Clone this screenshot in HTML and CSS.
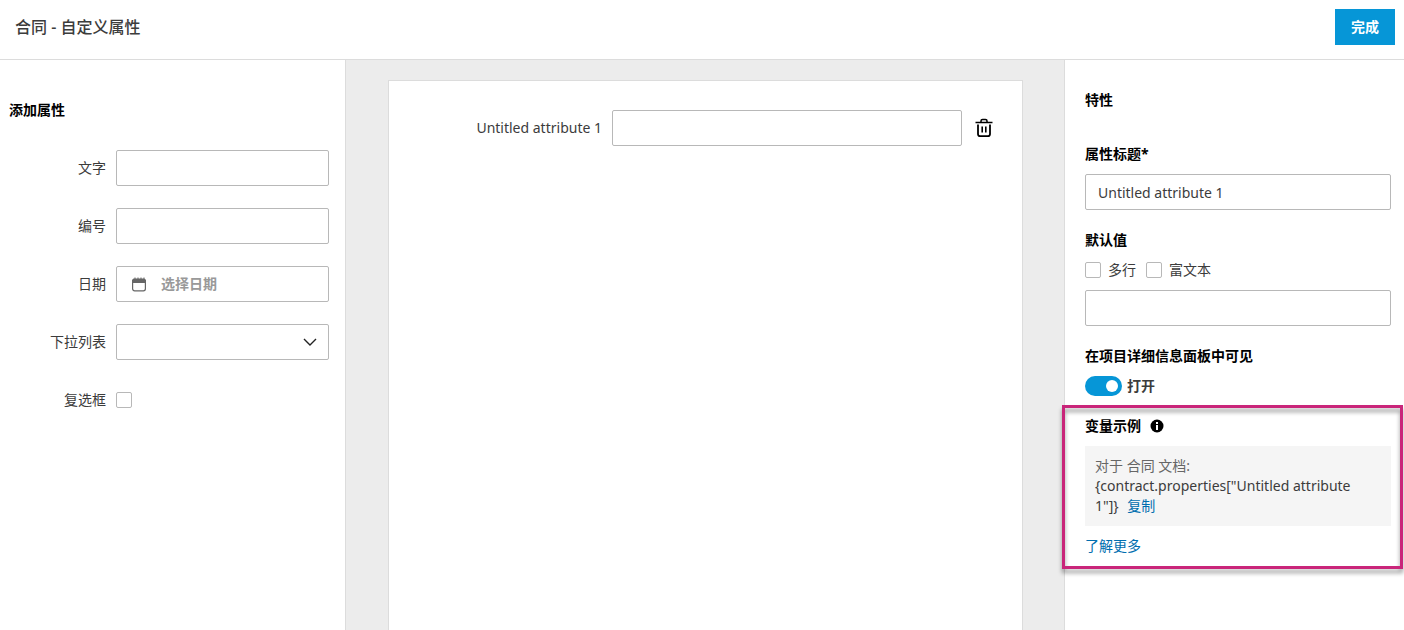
FILE: index.html
```html
<!DOCTYPE html>
<html lang="zh-CN">
<head>
  <meta charset="UTF-8">
  <title>合同 - 自定义属性</title>
  <link rel="stylesheet" href="styles.css">
</head>
<body>
  <header class="topbar">
    <h1>合同 - 自定义属性</h1>
    <button class="done" type="button">完成</button>
  </header>

  <main class="layout">
    <aside class="palette">
      <h2>添加属性</h2>
      <div class="field">
        <label for="addText">文字</label>
        <input id="addText" class="box" type="text">
      </div>
      <div class="field">
        <label for="addNumber">编号</label>
        <input id="addNumber" class="box" type="text">
      </div>
      <div class="field">
        <label for="addDate">日期</label>
        <div class="box date">
          <svg width="14" height="15" viewBox="0 0 14 15">
            <rect x="0.6" y="2.6" width="12.8" height="11.2" rx="2" fill="none" stroke="#666" stroke-width="1.2"/>
            <path d="M0 6V3l1.500-1.500h1V.5h1v1h2V.5h1v1h2V.5h1v1h2V.5h1v1L14 3v3z" fill="#666"/>
          </svg>
          <input id="addDate" type="text" placeholder="选择日期">
        </div>
      </div>
      <div class="field">
        <label for="addList">下拉列表</label>
        <div class="dropdown">
          <select id="addList" class="box"><option></option></select>
          <svg width="14" height="8" viewBox="0 0 14 8"><path d="M1 1l6 6 6-6" fill="none" stroke="#222" stroke-width="1.4"/></svg>
        </div>
      </div>
      <div class="field">
        <label for="addCheck">复选框</label>
        <input id="addCheck" class="check" type="checkbox">
      </div>
    </aside>

    <section class="canvas">
      <div class="sheet">
        <div class="attribute">
          <label for="attr1">Untitled attribute 1</label>
          <input id="attr1" class="box" type="text">
          <button class="trash" type="button" aria-label="删除">
            <svg width="18" height="20" viewBox="0 0 18 20" fill="none" stroke="#000">
              <path d="M0.500 4.500h17" stroke-width="1.500"/>
              <path d="M6 4V3q0-1.500 1.500-1.500h3q1.500 0 1.500 1.500v1" stroke-width="1.500"/>
              <path d="M3 6.500V16q0 2.200 2.200 2.200h7.600Q15 18.200 15 16V6.500" stroke-width="1.800"/>
              <path d="M7.200 8.500v6M10.800 8.500v6" stroke-width="1.600"/>
            </svg>
          </button>
        </div>
      </div>
    </section>

    <aside class="props">
      <h2>特性</h2>

      <div class="group">
        <label class="title" for="attrTitle">属性标题*</label>
        <input id="attrTitle" class="box" type="text" value="Untitled attribute 1">
      </div>

      <div class="group">
        <label class="title" for="defValue">默认值</label>
        <div class="checks">
          <label><input class="check" type="checkbox">多行</label>
          <label><input class="check" type="checkbox">富文本</label>
        </div>
        <input id="defValue" class="box" type="text">
      </div>

      <div class="group">
        <div class="title">在项目详细信息面板中可见</div>
        <label class="switch"><input type="checkbox" checked>打开</label>
      </div>

      <div class="group highlight">
        <div class="title">变量示例
          <svg width="14" height="14" viewBox="0 0 14 14">
            <circle cx="7" cy="7" r="6.500" fill="#000"/>
            <path d="M6 3h2v2H6zM6 6h2v5H6z" fill="#fff"/>
          </svg>
        </div>
        <div class="example">
          <span class="hint">对于 合同 文档:</span><br>
          {contract.properties["Untitled attribute 1"]} <a class="copy" href="#">复制</a>
        </div>
        <a href="#">了解更多</a>
      </div>
    </aside>
  </main>
</body>
</html>
```
FILE: styles.css
```css
* { box-sizing:border-box; }
body {
  margin:0; height:100vh; overflow:hidden;
  display:flex; flex-direction:column;
  background:#fff; color:#3c3c3c;
  font:14px/20px "Noto Sans", "Noto Sans CJK SC", sans-serif;
}
h1, h2 { margin:0; }
h2, .title { font-size:14px; line-height:20px; font-weight:bold; color:#000; }
input, select, button { font:inherit; color:inherit; margin:0; }
a { color:#006eaf; text-decoration:none; }
svg { display:block; flex:none; }

.topbar {
  display:flex; align-items:center; justify-content:space-between;
  padding:9px 9px 14px 15px; border-bottom:1px solid #dcdcdc;
}
.topbar h1 { font-size:16px; line-height:24px; font-weight:500; }
.done {
  height:36px; padding:0 16px; border:none;
  background:#0696d7; color:#fff; font-weight:bold; cursor:pointer;
}

.layout { flex:1; min-height:0; display:grid; grid-template-columns:346px 1fr 340px; }

.box {
  width:100%; height:36px; padding:0 12px;
  border:1px solid #b8b8b8; border-radius:2px; background:#fff;
}
.check {
  appearance:none; flex:none; width:16px; height:16px;
  border:1px solid #b8b8b8; border-radius:2px; background:#fff;
}

/* left: attribute types */
.palette {
  padding:40px 16px 0 9px; border-right:1px solid #dcdcdc;
  display:flex; flex-direction:column; gap:22px;
}
.palette h2 { margin-bottom:8px; }
.field {
  height:36px; display:grid; grid-template-columns:97px minmax(0,1fr);
  gap:10px; align-items:center;
}
.field > label { text-align:right; }
.date { display:flex; align-items:center; gap:15px; padding:0 15px; }
.date input { flex:1; min-width:0; padding:0; border:none; outline:none; background:none; }
.date input::placeholder { color:#999; font-weight:bold; }
.dropdown { position:relative; }
.dropdown select { appearance:none; display:block; }
.dropdown svg { position:absolute; right:12px; top:14px; pointer-events:none; }

/* middle: form preview */
.canvas { display:flex; padding:20px 41px 0 42px; background:#ececec; }
.sheet {
  flex:1; padding:29px 29px 0;
  border:1px solid #dcdcdc; border-bottom:none; background:#fff;
}
.attribute { display:flex; align-items:center; justify-content:flex-end; gap:10px; }
.attribute .box { width:350px; }
.trash { padding:0 0 0 3px; border:none; background:none; cursor:pointer; }

/* right: attribute settings */
.props {
  padding:30px 13px 0 20px; border-left:1px solid #dcdcdc;
  display:flex; flex-direction:column; gap:20px;
}
.props h2 { margin-bottom:14px; }
.group { display:flex; flex-direction:column; align-items:flex-start; gap:10px; }
.checks { display:flex; gap:10px; }
.checks label { display:flex; align-items:center; gap:7px; }
.switch { display:flex; align-items:center; gap:5px; font-weight:bold; }
.switch input {
  appearance:none; display:flex; align-items:center; justify-content:flex-start;
  width:37px; height:20px; padding:0 4px; border-radius:10px; background:#999;
}
.switch input::before { content:""; width:12px; height:12px; border-radius:50%; background:#fff; }
.switch input:checked { justify-content:flex-end; background:#0696d7; }

.highlight { position:relative; }
.highlight::after {
  content:""; position:absolute; inset:-11px -12px -13px -23px;
  border:3px solid #c9257a; pointer-events:none;
  filter:drop-shadow(0 4px 2px rgba(0,0,0,.4));
}
.highlight .title { display:flex; align-items:center; gap:9px; }
.example { width:100%; padding:10px 30px 10px 10px; background:#f5f5f5; }
.hint { color:#666; }
.copy { margin-left:5px; }
```
